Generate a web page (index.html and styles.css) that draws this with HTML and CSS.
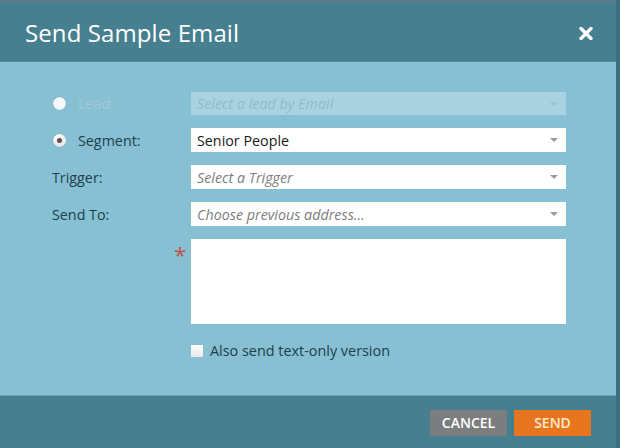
FILE: index.html
```html
<!DOCTYPE html>
<html lang="en">
<head>
    <meta charset="UTF-8">
    <title>Send Sample Email</title>
    <link rel="stylesheet" href="styles.css">
</head>
<body>
    <div class="modal">
        <div class="modal-header">
            <h1 class="modal-title">Send Sample Email</h1>
            <svg class="close-btn" width="14" height="13" viewBox="0 0 14 13">
                <path d="M2 1.5 L12 11.5 M12 1.5 L2 11.5" stroke="#ffffff" stroke-width="3.4" stroke-linecap="round"/>
            </svg>
        </div>

        <div class="modal-body">
            <div class="form-row">
                <label class="row-label disabled"><span class="radio"></span>Lead:</label>
                <div class="select disabled"><span class="placeholder">Select a lead by Email</span><span class="arrow"></span></div>
            </div>
            <div class="form-row">
                <label class="row-label"><span class="radio checked"></span>Segment:</label>
                <div class="select"><span class="value">Senior People</span><span class="arrow"></span></div>
            </div>
            <div class="form-row">
                <label class="row-label plain">Trigger:</label>
                <div class="select"><span class="placeholder">Select a Trigger</span><span class="arrow"></span></div>
            </div>
            <div class="form-row">
                <label class="row-label plain">Send To:</label>
                <div class="select"><span class="placeholder">Choose previous address...</span><span class="arrow"></span></div>
            </div>
            <div class="form-row textarea-row">
                <span class="required">*</span>
                <div class="textarea"></div>
            </div>
            <div class="form-row check-row">
                <span></span>
                <label class="check-label"><span class="checkbox"></span>Also send text-only version</label>
            </div>
        </div>

        <div class="modal-footer">
            <button class="btn btn-cancel">CANCEL</button>
            <button class="btn btn-send">SEND</button>
        </div>
    </div>
</body>
</html>
```

FILE: styles.css
```css
body {
    margin: 0;
    height: 448px;
    background-color: #3f6f7d;
    font-family: "Open Sans", "Liberation Sans", sans-serif;
    overflow: hidden;
}

.modal {
    width: 616px;
    height: 448px;
    display: flex;
    flex-direction: column;
}

.modal-header {
    height: 58px;
    border-top: 3px solid #5b7c86;
    background-color: #467f90;
    display: flex;
    align-items: center;
    justify-content: space-between;
    padding: 0 23px 0 25px;
    border-bottom: 1px solid #4e8a9b;
}

.modal-title {
    margin: 0;
    color: #ffffff;
    font-size: 24px;
    font-weight: normal;
    letter-spacing: 0.1px;
}

.close-btn {
    margin-top: 2px;
}

.modal-body {
    flex: 1;
    background-color: #87c0d3;
    padding: 30px 0 0 52px;
    border-bottom: 1px solid #6ba7ba;
}

.form-row {
    display: grid;
    grid-template-columns: 139px 375px;
    align-items: center;
    margin-bottom: 13px;
}

.row-label {
    display: flex;
    align-items: center;
    font-size: 14.3px;
    color: #1d3f4b;
}

.row-label.disabled {
    color: #a3c9d6;
}

.radio {
    width: 13px;
    height: 13px;
    border-radius: 50%;
    background: linear-gradient(#ffffff, #e4e4e4);
    box-shadow: 0 0 1px rgba(0, 0, 0, 0.3);
    margin: 0 12px 0 1px;
    display: flex;
    align-items: center;
    justify-content: center;
}

.row-label.disabled .radio {
    background: #f3f8fa;
}

.radio.checked::after {
    content: "";
    width: 5px;
    height: 5px;
    border-radius: 50%;
    background-color: #6b4a4a;
}

.select {
    height: 24px;
    background-color: #ffffff;
    display: flex;
    align-items: center;
    justify-content: space-between;
    padding: 0 8px 0 6px;
    box-sizing: border-box;
    font-size: 14.3px;
}

.select.disabled {
    height: 23px;
    background-color: #a9d3e1;
}

.placeholder {
    font-style: italic;
    color: #7d7d7d;
}

.select.disabled .placeholder {
    color: #8fbccc;
}

.value {
    color: #1a1a1a;
}

.arrow {
    width: 0;
    height: 0;
    border-left: 4px solid transparent;
    border-right: 4px solid transparent;
    border-top: 4px solid #9a9a9a;
}

.select.disabled .arrow {
    border-top-color: #95c3d2;
}

.textarea-row {
    align-items: start;
    margin-top: 1px;
}

.required {
    justify-self: end;
    margin-right: 5px;
    color: #c0504d;
    font-size: 22px;
    line-height: 30px;
}

.textarea {
    height: 85px;
    background-color: #ffffff;
}

.check-row {
    margin-top: 17px;
}

.check-label {
    display: flex;
    align-items: center;
    font-size: 14.4px;
    color: #1d3f4b;
}

.checkbox {
    width: 12px;
    height: 12px;
    background: linear-gradient(#ffffff, #e8e8e8);
    margin: 0 7px 0 0;
}

.modal-footer {
    height: 52px;
    background-color: #467f90;
    display: flex;
    align-items: center;
    justify-content: flex-end;
    gap: 7px;
    padding-right: 25px;
}

.btn {
    height: 26px;
    border: none;
    color: #ffffff;
    font-family: "Open Sans", "Liberation Sans", sans-serif;
    font-size: 14px;
    font-weight: 600;
    padding: 0;
    margin-top: 1px;
}

.btn-cancel {
    width: 77px;
    background-color: #7b7d7f;
}

.btn-send {
    width: 77px;
    background-color: #e8761f;
    color: #fde9cf;
}
```
